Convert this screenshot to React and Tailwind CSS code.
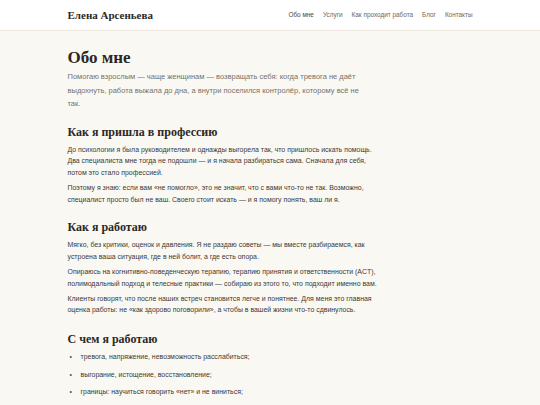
export default function App() {
    const nav = ['Обо мне', 'Услуги', 'Как проходит работа', 'Блог', 'Контакты']

    const issues = [
        'тревога, напряжение, невозможность расслабиться;',
        'выгорание, истощение, восстановление;',
        'границы: научиться говорить «нет» и не виниться;',
        'самооценка и внутренний критик: как быть добрее к себе;',
    ]

    return (
        <div className="min-h-screen bg-[#faf8f3] font-['Liberation_Sans',Arial,sans-serif] text-[#3b3935]">
            {/* Шапка */}
            <header className="bg-white border-b border-[#ece6dc]">
                <div className="mx-auto w-[405px] h-[30px] flex items-center justify-between">
                    <div className="font-['Liberation_Serif',serif] font-bold text-[11px] text-[#2b2824]">
                        Елена Арсеньева
                    </div>
                    <nav className="flex items-center gap-[9px] text-[6.4px] text-[#6b6862]">
                        {nav.map((item, i) => (
                            <a key={item} className={i === 0 ? 'text-[#3f4c4a]' : ''}>{item}</a>
                        ))}
                    </nav>
                </div>
            </header>

            {/* Контент */}
            <main className="mx-auto w-[405px] pt-[17px]">
                <div className="w-[305px]">
                    <h1 className="font-['Liberation_Serif',serif] font-bold text-[17px] leading-[20px] text-[#2b2824]">
                        Обо мне
                    </h1>
                    <p className="mt-[2px] text-[7.5px] leading-[13.5px] text-[#76726b]">
                        Помогаю взрослым — чаще женщинам — возвращать себя: когда тревога не даёт выдохнуть, работа выжала до дна, а внутри поселился контролёр, которому всё не так.
                    </p>

                    <h2 className="mt-[13px] font-['Liberation_Serif',serif] font-bold text-[12px] leading-[16px] text-[#2b2824]">
                        Как я пришла в профессию
                    </h2>
                    <div className="mt-[4px] text-[6.95px] leading-[11.8px] flex flex-col gap-[3px]">
                        <p>До психологии я была руководителем и однажды выгорела так, что пришлось искать помощь. Два специалиста мне тогда не подошли — и я начала разбираться сама. Сначала для себя, потом это стало профессией.</p>
                        <p>Поэтому я знаю: если вам «не помогло», это не значит, что с вами что-то не так. Возможно, специалист просто был не ваш. Своего стоит искать — и я помогу понять, ваш ли я.</p>
                    </div>

                    <h2 className="mt-[14px] font-['Liberation_Serif',serif] font-bold text-[12px] leading-[16px] text-[#2b2824]">
                        Как я работаю
                    </h2>
                    <div className="mt-[4px] text-[6.95px] leading-[11.8px] flex flex-col gap-[3px]">
                        <p>Мягко, без критики, оценок и давления. Я не раздаю советы — мы вместе разбираемся, как устроена ваша ситуация, где в ней болит, а где есть опора.</p>
                        <p className="w-[316px]">Опираюсь на когнитивно-поведенческую терапию, терапию принятия и ответственности (ACT), полимодальный подход и телесные практики — собираю из этого то, что подходит именно вам.</p>
                        <p>Клиенты говорят, что после наших встреч становится легче и понятнее. Для меня это главная оценка работы: не «как здорово поговорили», а чтобы в вашей жизни что-то сдвинулось.</p>
                    </div>

                    <h2 className="mt-[15px] font-['Liberation_Serif',serif] font-bold text-[12px] leading-[16px] text-[#2b2824]">
                        С чем я работаю
                    </h2>
                    <ul className="mt-[4px] text-[6.95px] leading-[11.8px] flex flex-col gap-[5.5px]">
                        {issues.map((t) => (
                            <li key={t} className="flex items-center">
                                <span className="w-[13px] pl-[2px] text-[#55524c]">•</span>
                                <span>{t}</span>
                            </li>
                        ))}
                    </ul>
                </div>
            </main>
        </div>
    )
}
